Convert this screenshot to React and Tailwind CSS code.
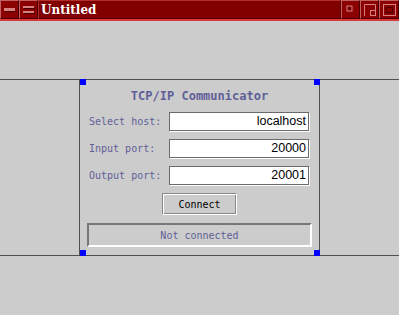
import React from 'react';

const mono = { fontFamily: '"DejaVu Sans Mono", "Liberation Mono", monospace' };

function TitleButton({ children, wide }) {
  return (
    <div className={`${wide ? 'w-[20px]' : 'w-[19px]'} h-[19px] shrink-0 bg-[#8b0000] border-t border-l border-[#c06060] border-r border-b border-r-[#4a0000] border-b-[#4a0000]`}>
      <svg width="18" height="18" viewBox="0 0 18 18" className="block">
        {children}
      </svg>
    </div>
  );
}

function Field({ label, value }) {
  return (
    <div className="flex items-center h-[19px]">
      <div className="w-[89px] shrink-0 pl-[9px] whitespace-nowrap text-[10px] text-[#5f5f98]" style={mono}>{label}</div>
      <div className="w-[140px] h-[19px] bg-white border border-[#6a6a6a] shadow-[1px_1px_0_#ffffff] flex items-center justify-end pr-[2px] text-[12.5px] text-black" style={{ fontFamily: '"Liberation Sans", Arial, sans-serif' }}>
        {value}
      </div>
    </div>
  );
}

export default function App() {
  return (
    <div className="w-[399px] h-[315px] bg-[#cccccc] overflow-hidden">
      {/* title bar */}
      <div className="flex h-[19px] bg-[#8b0000]">
        <TitleButton>
          <rect x="3" y="7" width="11" height="3" fill="#d88080" />
          <rect x="4" y="10" width="11" height="1" fill="#4a0000" />
        </TitleButton>
        <TitleButton>
          <rect x="3" y="5" width="11" height="2" fill="#d88080" />
          <rect x="4" y="7" width="11" height="1" fill="#4a0000" />
          <rect x="3" y="10" width="11" height="2" fill="#d88080" />
          <rect x="4" y="12" width="11" height="1" fill="#4a0000" />
        </TitleButton>
        <div className="flex-1 h-[19px] bg-[#800000] border-t border-l border-[#b03030] border-b border-r border-b-[#5a0000] border-r-[#5a0000] flex items-center pl-[2px]">
          <span className="text-white font-bold text-[12px] leading-none" style={{ fontFamily: '"DejaVu Serif", "Liberation Serif", serif' }}>Untitled</span>
        </div>
        <TitleButton>
          <rect x="5" y="5" width="5" height="5" fill="none" stroke="#d88080" strokeWidth="1" />
          <rect x="6.5" y="6.5" width="2" height="2" fill="#4a0000" />
        </TitleButton>
        <TitleButton>
          <path d="M3.5 15 V3.5 H14.5 V15" fill="none" stroke="#d88080" strokeWidth="1" />
          <rect x="9.5" y="9.5" width="5" height="5" fill="none" stroke="#d88080" strokeWidth="1" />
        </TitleButton>
        <TitleButton wide>
          <rect x="3.5" y="3.5" width="12" height="11" fill="none" stroke="#d88080" strokeWidth="1" />
          <rect x="6.5" y="6.5" width="6" height="5" fill="none" stroke="#4a0000" strokeWidth="1" />
        </TitleButton>
      </div>
      <div className="h-[2px] bg-[#d83a3a]" />

      <div className="h-[58px]" />

      {/* work area */}
      <div className="border-y border-[#505050] flex justify-center">
        <div className="relative w-[241px] h-[175px] border-x border-[#505050] flex flex-col items-center">
          <div className="absolute left-0 -top-px w-[6px] h-[6px] bg-[#0000ff]" />
          <div className="absolute -right-px -top-px w-[6px] h-[6px] bg-[#0000ff]" />
          <div className="absolute left-0 -bottom-px w-[6px] h-[6px] bg-[#0000ff]" />
          <div className="absolute -right-px -bottom-px w-[6px] h-[6px] bg-[#0000ff]" />

          <div className="mt-[8px] h-[16px] leading-[16px] text-[12px] font-bold text-[#5f5f98]" style={mono}>TCP/IP Communicator</div>

          <div className="mt-[8px] self-stretch flex flex-col gap-[8px]">
            <Field label="Select host:" value="localhost" />
            <Field label="Input port:" value="20000" />
            <Field label="Output port:" value="20001" />
          </div>

          <button className="mt-[8px] w-[75px] h-[22px] border border-t-[#888888] border-l-[#888888] border-b-white border-r-white shadow-[inset_1px_1px_0_#ffffff,inset_-1px_-1px_0_#888888] text-[10px] text-black bg-[#cccccc]" style={mono}>
            Connect
          </button>

          <div className="mt-[8px] w-[225px] h-[24px] border-2 border-t-[#777777] border-l-[#777777] border-b-white border-r-white flex items-center justify-center text-[10px] text-[#5f5f98]" style={mono}>
            Not connected
          </div>
        </div>
      </div>
    </div>
  );
}
